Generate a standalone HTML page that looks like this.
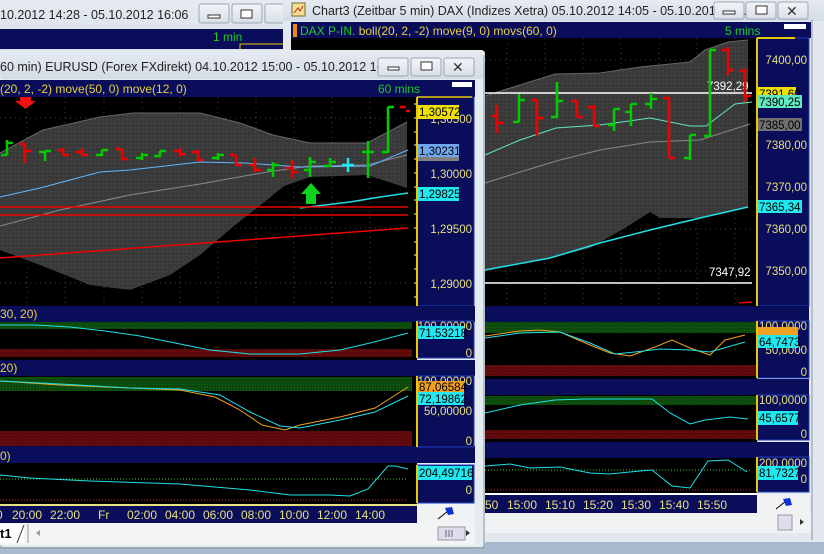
<!DOCTYPE html>
<html><head><meta charset="utf-8"><style>
html,body{margin:0;padding:0;width:824px;height:554px;overflow:hidden;background:#a9b9cd}
svg{display:block}
text{font-family:"Liberation Sans",sans-serif}
</style></head><body>
<svg width="824" height="554" viewBox="0 0 824 554" xmlns="http://www.w3.org/2000/svg">
<defs>
<linearGradient id="tb" x1="0" y1="0" x2="0" y2="1"><stop offset="0" stop-color="#e6ebf1"/><stop offset="1" stop-color="#d3dce6"/></linearGradient>
<linearGradient id="btn" x1="0" y1="0" x2="0" y2="1"><stop offset="0" stop-color="#f2f4f7"/><stop offset="1" stop-color="#d9dfe6"/></linearGradient>
<pattern id="gp" width="4" height="4" patternUnits="userSpaceOnUse"><rect width="4" height="4" fill="#3a3a3a"/><rect x="1" y="1" width="1" height="1" fill="#2a3a2a"/><rect x="3" y="3" width="1" height="1" fill="#4a4a4a"/></pattern>
<pattern id="grn" width="3" height="3" patternUnits="userSpaceOnUse"><rect width="3" height="3" fill="#0b4a0b"/><rect width="1" height="1" fill="#1a601a"/></pattern>
<pattern id="red" width="3" height="3" patternUnits="userSpaceOnUse"><rect width="3" height="3" fill="#5a0a0a"/><rect width="1" height="1" fill="#7a1010"/></pattern>
</defs>

<!-- back window -->
<rect x="0" y="0" width="290" height="60" fill="url(#tb)"/>
<text x="0" y="19" font-size="12.5" fill="#222">10.2012 14:28 - 05.10.2012 16:06</text>
<g stroke="#9aa6b4" fill="url(#btn)"><rect x="199" y="4" width="30" height="19" rx="2"/><rect x="232" y="4" width="30" height="19" rx="2"/><rect x="265" y="4" width="25" height="19" rx="2"/></g>
<rect x="208" y="15" width="12" height="3" fill="#fff" stroke="#333" stroke-width="1"/>
<rect x="241" y="10" width="11" height="8" fill="#fff" stroke="#333"/>
<rect x="0" y="29" width="285" height="20" fill="#0a0d5a"/>
<text x="213" y="41" font-size="12" fill="#22cc22">1 min</text>
<polyline points="240,50 240,44 285,44" stroke="#e8c800" fill="none"/>

<!-- Chart3 window -->
<rect x="283" y="0" width="541" height="542" fill="#e3e8ee"/>
<rect x="283" y="0" width="541" height="21" fill="url(#tb)"/>
<rect x="292" y="3" width="13" height="13" fill="#f4e090" stroke="#7a6a30"/><path d="M294 13 L298 8 L300 11 L303 6" stroke="#c02020" fill="none"/>
<text x="312" y="15" font-size="12.5" fill="#222">Chart3 (Zeitbar 5 min)  DAX (Indizes Xetra) 05.10.2012 14:05 - 05.10.2012 16...</text>
<g stroke="#9aa6b4" fill="url(#btn)"><rect x="714" y="2" width="30" height="17" rx="2"/><rect x="746" y="2" width="30" height="17" rx="2"/><rect x="778" y="2" width="30" height="17" rx="2"/></g>
<rect x="723" y="11" width="12" height="3" fill="#fff" stroke="#333"/>
<rect x="756" y="6" width="11" height="8" fill="#fff" stroke="#333"/>
<text x="786" y="16" font-size="14" fill="#333">✕</text>
<line x1="812" y1="20" x2="812" y2="540" stroke="#8a96a4"/>
<rect x="291" y="22" width="520" height="16" fill="#0a0d5a"/>
<rect x="293" y="24" width="4" height="13" fill="#f08a00"/>
<text x="300" y="35" font-size="12" fill="#22cc22">DAX P-IN. <tspan fill="#e8d040">boll(20, 2, -2) move(9, 0) movs(60, 0)</tspan></text>
<text x="725" y="35" font-size="12" fill="#22cc22">5 mins</text>
<rect x="784" y="24" width="22" height="5" fill="#fff"/>
<!-- DAX main chart -->
<rect x="291" y="38" width="466" height="268" fill="#000"/>
<g stroke="#444" stroke-dasharray="1,4"><line x1="485" y1="60" x2="752" y2="60"/><line x1="485" y1="102" x2="752" y2="102"/><line x1="485" y1="145" x2="752" y2="145"/><line x1="485" y1="187" x2="752" y2="187"/><line x1="485" y1="229" x2="752" y2="229"/><line x1="485" y1="271" x2="752" y2="271"/>
<line x1="507" y1="38" x2="507" y2="306"/><line x1="545" y1="38" x2="545" y2="306"/><line x1="583" y1="38" x2="583" y2="306"/><line x1="621" y1="38" x2="621" y2="306"/><line x1="659" y1="38" x2="659" y2="306"/><line x1="697" y1="38" x2="697" y2="306"/><line x1="735" y1="38" x2="735" y2="306"/></g>
<polygon points="485,96 520,85 555,74 600,73 640,67 690,62 705,50 728,42 748,40 748,207 700,218 660,218 650,212 625,228 590,248 550,258 485,270" fill="url(#gp)"/>
<polyline points="485,96 520,85 555,74 600,73 640,67 690,62 705,50 728,42 748,40" fill="none" stroke="#666"/>
<polyline points="485,183 520,172 560,160 600,150 650,142 700,140 750,124" fill="none" stroke="#888"/>
<polyline points="485,155 520,140 556,128 600,125 650,118 690,126 706,126 735,104 752,102" fill="none" stroke="#5ee8c0"/>
<polyline points="485,270 550,258 600,243 650,230 700,218 748,207" fill="none" stroke="#20e0e8" stroke-width="1.5"/>
<line x1="485" y1="93" x2="752" y2="93" stroke="#fff" stroke-width="1.5"/>
<line x1="485" y1="283" x2="752" y2="283" stroke="#fff" stroke-width="1.5"/>
<line x1="739" y1="303" x2="752" y2="302" stroke="#e00" stroke-width="1.5"/>
<text x="707" y="90" font-size="11.5" fill="#fff">7392,29</text>
<text x="709" y="276" font-size="11.5" fill="#fff">7347,92</text>
<g stroke-width="2.5" fill="none">
<path d="M497 105V133M491 116h6M497 123h6" stroke="#e00"/>
<path d="M519 94V122M513 122h6M519 100h6" stroke="#0c0"/>
<path d="M537 100V136M531 100h6M537 118h6" stroke="#e00"/>
<path d="M557 82V118M551 117h6M557 101h6" stroke="#0c0"/>
<path d="M577 101V117M571 101h6M577 117h6" stroke="#e00"/>
<path d="M594 105V126M588 107h6M594 126h6" stroke="#e00"/>
<path d="M614 109V131M608 125h6M614 109h6" stroke="#0c0"/>
<path d="M631 104V126M625 112h6M631 104h6" stroke="#0c0"/>
<path d="M651 93V109M645 104h6M651 99h6" stroke="#0c0"/>
<path d="M669 97V158M663 98h6M669 158h6" stroke="#e00"/>
<path d="M690 135V160M684 158h6M690 135h6" stroke="#0c0"/>
<path d="M710 50V136M704 136h6M710 50h6" stroke="#0c0"/>
<path d="M728 47V75M722 50h6M728 70h6" stroke="#e00"/>
<path d="M745 68V102M739 71h6M745 96h6" stroke="#e00"/>
</g>
<!-- DAX axis -->
<rect x="757" y="38" width="52" height="268" fill="#0a0d5a" stroke="#2040c0"/>
<line x1="757" y1="38" x2="757" y2="306" stroke="#e8c800" stroke-width="2"/>
<line x1="757" y1="38" x2="795" y2="38" stroke="#e8c800" stroke-width="2"/>
<g font-size="11.5" fill="#e8e080" text-anchor="end"><text x="807" y="64">7400,00</text><text x="807" y="149">7380,00</text><text x="807" y="191">7370,00</text><text x="807" y="233">7360,00</text><text x="807" y="275">7350,00</text></g>
<rect x="758" y="87" width="38" height="13" fill="#f0e000"/><text x="759" y="98" font-size="11.5" fill="#000">7391,60</text>
<rect x="758" y="95" width="44" height="13" fill="#60e8c0"/><text x="759" y="106" font-size="11.5" fill="#000">7390,25</text>
<rect x="758" y="118" width="44" height="13" fill="#707070"/><text x="759" y="129" font-size="11.5" fill="#000">7385,00</text>
<rect x="758" y="200" width="44" height="13" fill="#20e8f0"/><text x="759" y="211" font-size="11.5" fill="#000">7365,34</text>
<!-- DAX lower panels -->
<rect x="485" y="306" width="324" height="16" fill="#0a0d5a"/>
<rect x="485" y="322" width="272" height="57" fill="#000"/>
<rect x="485" y="322" width="272" height="11" fill="url(#grn)"/><rect x="485" y="365" width="272" height="11" fill="url(#red)"/>
<polyline points="485,336 520,331 540,330 560,332 590,345 610,353 630,356 655,347 672,340 690,348 710,355 725,340 745,335" fill="none" stroke="#f0a020"/>
<polyline points="485,338 520,333 560,332 590,343 615,354 635,352 660,349 690,350 710,352 745,342" fill="none" stroke="#20e0e8"/>
<rect x="485" y="379" width="324" height="16" fill="#0a0d5a"/>
<rect x="485" y="395" width="272" height="47" fill="#000"/>
<rect x="485" y="396" width="272" height="9" fill="url(#grn)"/><rect x="485" y="430" width="272" height="9" fill="url(#red)"/>
<polyline points="485,413 520,405 555,400 585,399 652,399 670,413 690,424 705,420 730,417 748,419" fill="none" stroke="#20e0e8"/>
<rect x="485" y="442" width="324" height="16" fill="#0a0d5a"/>
<rect x="485" y="458" width="272" height="35" fill="#000"/>
<line x1="485" y1="470" x2="750" y2="470" stroke="#3c3" stroke-dasharray="1,2"/>
<line x1="485" y1="490" x2="750" y2="490" stroke="#c22" stroke-dasharray="1,2"/>
<polyline points="485,466 510,464 530,468 560,467 590,473 610,474 640,471 652,470 672,486 690,488 708,461 728,460 747,472" fill="none" stroke="#20e0e8"/>
<line x1="485" y1="494" x2="757" y2="494" stroke="#fff" stroke-width="2"/>
<rect x="485" y="495" width="272" height="18" fill="#0a0d5a"/>
<g font-size="12" fill="#e8e080"><text x="485" y="509">50</text><text x="507" y="509">15:00</text><text x="545" y="509">15:10</text><text x="583" y="509">15:20</text><text x="621" y="509">15:30</text><text x="659" y="509">15:40</text><text x="697" y="509">15:50</text></g>
<g fill="#0a0d5a" stroke="#2040c0"><rect x="757" y="321" width="52" height="57"/><rect x="757" y="395" width="52" height="45"/><rect x="757" y="457" width="52" height="35"/></g>
<g stroke="#e8c800" stroke-width="2"><line x1="757" y1="321" x2="757" y2="378"/><line x1="757" y1="395" x2="757" y2="440"/><line x1="757" y1="457" x2="757" y2="492"/></g>
<g font-size="11.5" fill="#e8e080" text-anchor="end"><text x="807" y="330">100,0000</text><text x="807" y="354">50,0000</text><text x="807" y="376">0</text><text x="807" y="404">100,0000</text><text x="807" y="438">0</text><text x="807" y="467">200,0000</text><text x="807" y="483">0</text></g>
<rect x="758" y="327" width="40" height="11" fill="#f0a020"/><rect x="758" y="335" width="40" height="13" fill="#20e8f0"/><text x="759" y="346" font-size="11.5" fill="#000">64,7473</text>
<rect x="758" y="411" width="40" height="14" fill="#20e8f0"/><text x="759" y="422" font-size="11.5" fill="#000">45,6577</text>
<rect x="758" y="466" width="40" height="14" fill="#20e8f0"/><text x="759" y="477" font-size="11.5" fill="#000">81,7327</text>
<rect x="757" y="494" width="53" height="19" fill="#f0f2f4"/>
<path d="M776 509 L786 501" stroke="#000"/><path d="M783 499 L790 498 L792 505 L786 506Z" fill="#1030d0"/>
<rect x="485" y="513" width="326" height="20" fill="#f0f2f4"/>
<rect x="778" y="515" width="14" height="15" fill="#dde" stroke="#999"/>
<path d="M800 519 L804 522 L800 525Z" fill="#333"/>

<!-- EURUSD window -->
<rect x="0" y="50" width="485" height="497" fill="#e6ebf0" rx="4"/>
<rect x="0" y="50" width="485" height="29" fill="url(#tb)" rx="4"/>
<text x="0" y="71" font-size="12.5" fill="#222">60 min)  EURUSD (Forex FXdirekt) 04.10.2012 15:00 - 05.10.2012 16:00</text>
<g stroke="#9aa6b4" fill="url(#btn)"><rect x="378" y="58" width="30" height="18" rx="2"/><rect x="411" y="58" width="30" height="18" rx="2"/><rect x="444" y="58" width="30" height="18" rx="2"/></g>
<rect x="388" y="67" width="11" height="3" fill="#fff" stroke="#333"/>
<rect x="421" y="62" width="11" height="8" fill="#fff" stroke="#333"/>
<text x="452" y="72" font-size="14" fill="#333">✕</text>
<rect x="0" y="80" width="475" height="17" fill="#0a0d5a"/>
<text x="0" y="93" font-size="12" fill="#e8d040">(20, 2, -2) move(50, 0) move(12, 0)</text>
<text x="378" y="93" font-size="12" fill="#22cc22">60 mins</text>
<rect x="452" y="82" width="20" height="5" fill="#fff"/>
<rect x="0" y="97" width="417" height="209" fill="#000"/>
<g stroke="#444" stroke-dasharray="1,4"><line x1="0" y1="118" x2="408" y2="118"/><line x1="0" y1="173" x2="408" y2="173"/><line x1="0" y1="228" x2="408" y2="228"/><line x1="0" y1="283" x2="408" y2="283"/>
<line x1="27" y1="97" x2="27" y2="306"/><line x1="65" y1="97" x2="65" y2="306"/><line x1="104" y1="97" x2="104" y2="306"/><line x1="142" y1="97" x2="142" y2="306"/><line x1="180" y1="97" x2="180" y2="306"/><line x1="218" y1="97" x2="218" y2="306"/><line x1="256" y1="97" x2="256" y2="306"/><line x1="294" y1="97" x2="294" y2="306"/><line x1="332" y1="97" x2="332" y2="306"/><line x1="370" y1="97" x2="370" y2="306"/></g>
<polygon points="0,153 43,130 100,117 133,113 200,113 240,123 273,135 310,143 367,143 407,122 407,188 367,175 310,177 284,186 267,200 235,225 200,255 170,275 130,290 90,285 40,265 0,250" fill="url(#gp)"/>
<polyline points="0,153 43,130 100,117 133,113 200,113 240,123 273,135 310,143 367,143 407,122" fill="none" stroke="#666"/>
<polyline points="0,226 60,210 130,195 200,184 267,172 310,166 367,165 407,155" fill="none" stroke="#8a8a8a"/>
<polyline points="0,197 40,188 100,172 130,170 200,162 245,163 300,167 370,166 408,150" fill="none" stroke="#60b8ff"/>
<polyline points="300,208 350,202 380,197 408,193" fill="none" stroke="#20e0e8" stroke-width="1.5"/>
<g stroke="#e00" stroke-width="1.5"><line x1="0" y1="207" x2="408" y2="207"/><line x1="0" y1="215" x2="408" y2="215"/><line x1="0" y1="258" x2="408" y2="228"/></g>
<g stroke-width="2.5" fill="none">
<path d="M7 140V155M1 155h6M7 143h6" stroke="#0c0"/>
<path d="M25 144V163M19 144h6M25 151h6" stroke="#e00"/>
<path d="M45 151V161M39 152h6M45 151h6" stroke="#0c0"/>
<path d="M63 148V155M57 150h6M63 155h6" stroke="#e00"/>
<path d="M82 148V156M76 152h6M82 155h6" stroke="#e00"/>
<path d="M102 150V156M96 155h6M102 150h6" stroke="#0c0"/>
<path d="M122 149V160M116 149h6M122 159h6" stroke="#e00"/>
<path d="M142 153V160M136 158h6M142 155h6" stroke="#0c0"/>
<path d="M160 151V157M154 156h6M160 151h6" stroke="#0c0"/>
<path d="M180 148V157M174 151h6M180 154h6" stroke="#e00"/>
<path d="M198 150V161M192 152h6M198 160h6" stroke="#e00"/>
<path d="M218 153V160M212 158h6M218 155h6" stroke="#0c0"/>
<path d="M236 155V166M230 155h6M236 165h6" stroke="#e00"/>
<path d="M255 158V172M249 165h6M255 170h6" stroke="#e00"/>
<path d="M273 162V177M267 170h6M273 165h6" stroke="#0c0"/>
<path d="M292 160V178M286 168h6M292 172h6" stroke="#e00"/>
<path d="M310 157V177M304 170h6M310 162h6" stroke="#0c0"/>
<path d="M330 158V167M324 166h6M330 162h6" stroke="#0c0"/>
<path d="M348 158V172M342 165h12" stroke="#20e8f0"/>
<path d="M368 141V178M362 152h6M368 152h6" stroke="#0c0"/>
<path d="M388 107V153M382 152h6M388 107h6" stroke="#0c0"/>
<path d="M400 107h6M406 111h4" stroke="#e00"/>
</g>
<path d="M20 97h11v4h5l-10.5 8l-10.5-8h5z" fill="#f01010"/>
<path d="M306 204h10v-10h5l-10-11l-10 11h5z" fill="#10d020"/>
<!-- EURUSD axis -->
<rect x="417" y="97" width="57" height="209" fill="#0a0d5a" stroke="#2040c0"/>
<g stroke="#fff"><line x1="414" y1="104" x2="417" y2="104"/><line x1="414" y1="118" x2="417" y2="118"/><line x1="414" y1="132" x2="417" y2="132"/><line x1="414" y1="145" x2="417" y2="145"/><line x1="414" y1="159" x2="417" y2="159"/><line x1="414" y1="173" x2="417" y2="173"/><line x1="414" y1="187" x2="417" y2="187"/><line x1="414" y1="200" x2="417" y2="200"/><line x1="414" y1="214" x2="417" y2="214"/><line x1="414" y1="228" x2="417" y2="228"/><line x1="414" y1="242" x2="417" y2="242"/><line x1="414" y1="255" x2="417" y2="255"/><line x1="414" y1="269" x2="417" y2="269"/><line x1="414" y1="283" x2="417" y2="283"/><line x1="414" y1="297" x2="417" y2="297"/></g>
<line x1="417" y1="97" x2="417" y2="306" stroke="#e8c800" stroke-width="2"/>
<line x1="417" y1="97" x2="472" y2="97" stroke="#e8c800" stroke-width="1.5"/>
<g font-size="11.5" fill="#e8e080" text-anchor="end"><text x="472" y="123">1,30500</text><text x="472" y="178">1,30000</text><text x="472" y="233">1,29500</text><text x="472" y="288">1,29000</text></g>
<rect x="418" y="105" width="41" height="14" fill="#f0e000"/><text x="419" y="116" font-size="11.5" fill="#000">1,30572</text>
<rect x="418" y="152" width="41" height="9" fill="#808080"/>
<rect x="418" y="144" width="41" height="13" fill="#70a8f0"/><text x="419" y="155" font-size="11.5" fill="#000">1,30231</text>
<rect x="418" y="187" width="41" height="14" fill="#20e8f0"/><text x="419" y="198" font-size="11.5" fill="#000">1,29825</text>
<!-- EURUSD lower panels -->
<rect x="0" y="306" width="475" height="16" fill="#0a0d5a"/>
<text x="0" y="318" font-size="12" fill="#e8d040">30, 20)</text>
<rect x="0" y="322" width="417" height="38" fill="#000"/>
<rect x="0" y="322" width="412" height="7" fill="url(#grn)"/><rect x="0" y="349" width="412" height="8" fill="url(#red)"/>
<polyline points="0,325 35,325 70,327 105,331 140,336 180,344 210,350 250,354 300,354 340,350 370,343 408,333" fill="none" stroke="#20e0e8"/>
<rect x="0" y="360" width="475" height="16" fill="#0a0d5a"/>
<text x="0" y="372" font-size="12" fill="#e8d040">20)</text>
<rect x="0" y="376" width="417" height="70" fill="#000"/>
<rect x="0" y="377" width="412" height="14" fill="url(#grn)"/><rect x="0" y="431" width="412" height="15" fill="url(#red)"/>
<polyline points="0,381 60,385 130,388 180,390 215,397 240,410 262,425 285,430 300,425 340,417 375,408 408,387" fill="none" stroke="#f0a020"/>
<polyline points="0,381 60,384 130,388 180,389 220,395 250,412 280,426 300,428 340,420 375,412 408,396" fill="none" stroke="#20e0e8"/>
<rect x="0" y="446" width="475" height="17" fill="#0a0d5a"/>
<text x="0" y="460" font-size="12" fill="#e8d040">0)</text>
<rect x="0" y="463" width="417" height="41" fill="#000"/>
<line x1="0" y1="479" x2="408" y2="479" stroke="#3c3" stroke-dasharray="1,2"/>
<line x1="0" y1="500" x2="408" y2="500" stroke="#c22" stroke-dasharray="1,2"/>
<polyline points="0,475 30,478 90,481 180,484 250,490 290,495 330,495 350,496 368,489 388,466 395,466 408,469" fill="none" stroke="#20e0e8"/>
<line x1="0" y1="505" x2="417" y2="505" stroke="#e8e060" stroke-width="1.5"/>
<rect x="0" y="506" width="417" height="17" fill="#0a0d5a"/>
<g font-size="12" fill="#e8e080"><text x="-4" y="519">0</text><text x="12" y="519">20:00</text><text x="50" y="519">22:00</text><text x="98" y="519">Fr</text><text x="127" y="519">02:00</text><text x="165" y="519">04:00</text><text x="203" y="519">06:00</text><text x="241" y="519">08:00</text><text x="279" y="519">10:00</text><text x="317" y="519">12:00</text><text x="355" y="519">14:00</text></g>
<g fill="#0a0d5a" stroke="#2040c0"><rect x="417" y="321" width="57" height="37"/><rect x="417" y="376" width="57" height="71"/><rect x="417" y="465" width="57" height="38"/></g>
<g stroke="#e8c800" stroke-width="2"><line x1="417" y1="321" x2="417" y2="358"/><line x1="417" y1="376" x2="417" y2="447"/><line x1="417" y1="465" x2="417" y2="503"/></g>
<g font-size="11.5" fill="#e8e080" text-anchor="end"><text x="472" y="330">100,00000</text><text x="472" y="357">0</text><text x="472" y="385">100,00000</text><text x="472" y="415">50,00000</text><text x="472" y="445">0</text><text x="472" y="494">0</text></g>
<rect x="418" y="326" width="46" height="13" fill="#20e8f0"/><text x="419" y="337" font-size="11.5" fill="#000">71,53218</text>
<rect x="418" y="381" width="46" height="12" fill="#f0a020"/><text x="419" y="391" font-size="11.5" fill="#000">87,06584</text>
<rect x="418" y="392" width="46" height="13" fill="#20e8f0"/><text x="419" y="403" font-size="11.5" fill="#000">72,19862</text>
<rect x="418" y="466" width="54" height="14" fill="#20e8f0"/><text x="419" y="477" font-size="11.5" fill="#000">204,49716</text>
<rect x="417" y="504" width="58" height="19" fill="#f0f2f4"/>
<path d="M438 519 L448 511" stroke="#000"/><path d="M445 508 L452 507 L454 514 L448 515Z" fill="#1030d0"/>
<rect x="0" y="523" width="475" height="22" fill="#f2f4f6"/>
<rect x="0" y="524" width="24" height="19" fill="#fff"/><path d="M17 543 L24 525" stroke="#333"/>
<text x="0" y="538" font-size="13" font-weight="bold" fill="#000">t1</text>
<line x1="28" y1="524" x2="28" y2="543" stroke="#999"/>
<path d="M40 530 L36 533 L40 536Z" fill="#999"/>
<rect x="438" y="527" width="27" height="13" fill="#dde" stroke="#999"/>
<path d="M446 530v7M449 530v7M452 530v7" stroke="#666"/>
<path d="M466 530 L470 533 L466 536Z" fill="#333"/>
<line x1="484" y1="55" x2="484" y2="548" stroke="#8a96a4"/>
<line x1="0" y1="548" x2="484" y2="548" stroke="#8a96a4"/>
</svg>
</body></html>
